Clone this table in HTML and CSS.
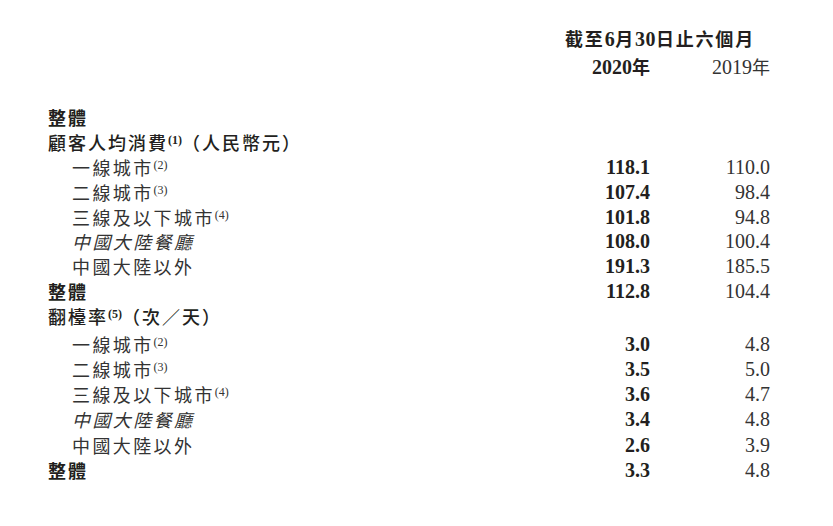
FILE: index.html
```html
<!DOCTYPE html>
<html lang="zh-Hant">
<head>
<meta charset="utf-8">
<link rel="stylesheet" href="styles.css">
</head>
<body>
<div class="table">
  <div class="head">
    <div class="period">截至<span class="num">6</span>月<span class="num">30</span>日止六個月</div>
    <div class="year y1"><span class="num">2020</span>年</div>
    <div class="year y2"><span class="num">2019</span>年</div>
  </div>
  <div class="body">
    <div class="row"><div class="label strong">整體</div><div class="v1"></div><div class="v2"></div></div>
    <div class="row"><div class="label semi">顧客人均消費<sup>(1)</sup>（人民幣元）</div><div class="v1"></div><div class="v2"></div></div>
    <div class="row"><div class="label sub">一線城市<sup>(2)</sup></div><div class="v1">118.1</div><div class="v2">110.0</div></div>
    <div class="row"><div class="label sub">二線城市<sup>(3)</sup></div><div class="v1">107.4</div><div class="v2">98.4</div></div>
    <div class="row"><div class="label sub">三線及以下城市<sup>(4)</sup></div><div class="v1">101.8</div><div class="v2">94.8</div></div>
    <div class="row"><div class="label sub it">中國大陸餐廳</div><div class="v1">108.0</div><div class="v2">100.4</div></div>
    <div class="row"><div class="label sub">中國大陸以外</div><div class="v1">191.3</div><div class="v2">185.5</div></div>
    <div class="row"><div class="label strong">整體</div><div class="v1">112.8</div><div class="v2">104.4</div></div>
    <div class="row"><div class="label semi">翻檯率<sup>(5)</sup>（次／天）</div><div class="v1"></div><div class="v2"></div></div>
  </div>
  <div class="body second">
    <div class="row"><div class="label sub">一線城市<sup>(2)</sup></div><div class="v1">3.0</div><div class="v2">4.8</div></div>
    <div class="row"><div class="label sub">二線城市<sup>(3)</sup></div><div class="v1">3.5</div><div class="v2">5.0</div></div>
    <div class="row"><div class="label sub">三線及以下城市<sup>(4)</sup></div><div class="v1">3.6</div><div class="v2">4.7</div></div>
    <div class="row"><div class="label sub it">中國大陸餐廳</div><div class="v1">3.4</div><div class="v2">4.8</div></div>
    <div class="row"><div class="label sub">中國大陸以外</div><div class="v1">2.6</div><div class="v2">3.9</div></div>
    <div class="row"><div class="label strong">整體</div><div class="v1">3.3</div><div class="v2">4.8</div></div>
  </div>
</div>
</body>
</html>
```
FILE: styles.css
```css
html, body {
  margin: 0;
  padding: 0;
  background: #ffffff;
}
body {
  color: #231f20;
  font-family: "Noto Sans CJK TC", "Noto Sans CJK SC", sans-serif;
}
.table {
  width: 722px;
  padding: 24px 0 0 48px;
}
.head {
  display: grid;
  grid-template-columns: 1fr 100px 120px;
  grid-template-rows: 28px 28px;
}
.period {
  grid-column: 2 / 4;
  grid-row: 1;
  text-align: center;
  font-size: 18px;
  font-weight: 700;
  line-height: 28px;
  letter-spacing: 1.8px;
  white-space: nowrap;
}
.period .num {
  font-family: "Liberation Serif", serif;
  font-size: 20px;
  letter-spacing: 0.5px;
}
.year {
  grid-row: 2;
  text-align: right;
  font-size: 18px;
  line-height: 28px;
  white-space: nowrap;
}
.year .num {
  font-family: "Liberation Serif", serif;
  font-size: 20px;
}
.y1 { grid-column: 2; font-weight: 700; }
.y2 { grid-column: 3; font-weight: 400; color: #333; }
.body {
  margin-top: 25px;
}
.body.second {
  margin-top: 3px;
}
.row {
  display: grid;
  grid-template-columns: 1fr 100px 120px;
  height: 24.8px;
  align-items: center;
}
.second .row {
  height: 25.2px;
}
.label {
  font-size: 18px;
  line-height: 24px;
  white-space: nowrap;
  letter-spacing: 1.5px;
}
.label.strong { font-weight: 700; letter-spacing: 2px; }
.label.semi { font-weight: 500; letter-spacing: 2px; }
.label.sub {
  padding-left: 24px;
  font-weight: 400;
  color: #333;
  letter-spacing: 2.4px;
}
.label.it { font-style: italic; }
.label sup {
  font-family: "Liberation Serif", serif;
  font-size: 12px;
  font-weight: 400;
  letter-spacing: 0;
  vertical-align: 6px;
  line-height: 0;
  margin-left: 0;
}
.label.semi sup { font-weight: 700; }
.v1, .v2 {
  font-family: "Liberation Serif", serif;
  font-size: 20px;
  text-align: right;
  line-height: 24px;
}
.v1 { font-weight: 700; }
.v2 { font-weight: 400; color: #333; }
```
